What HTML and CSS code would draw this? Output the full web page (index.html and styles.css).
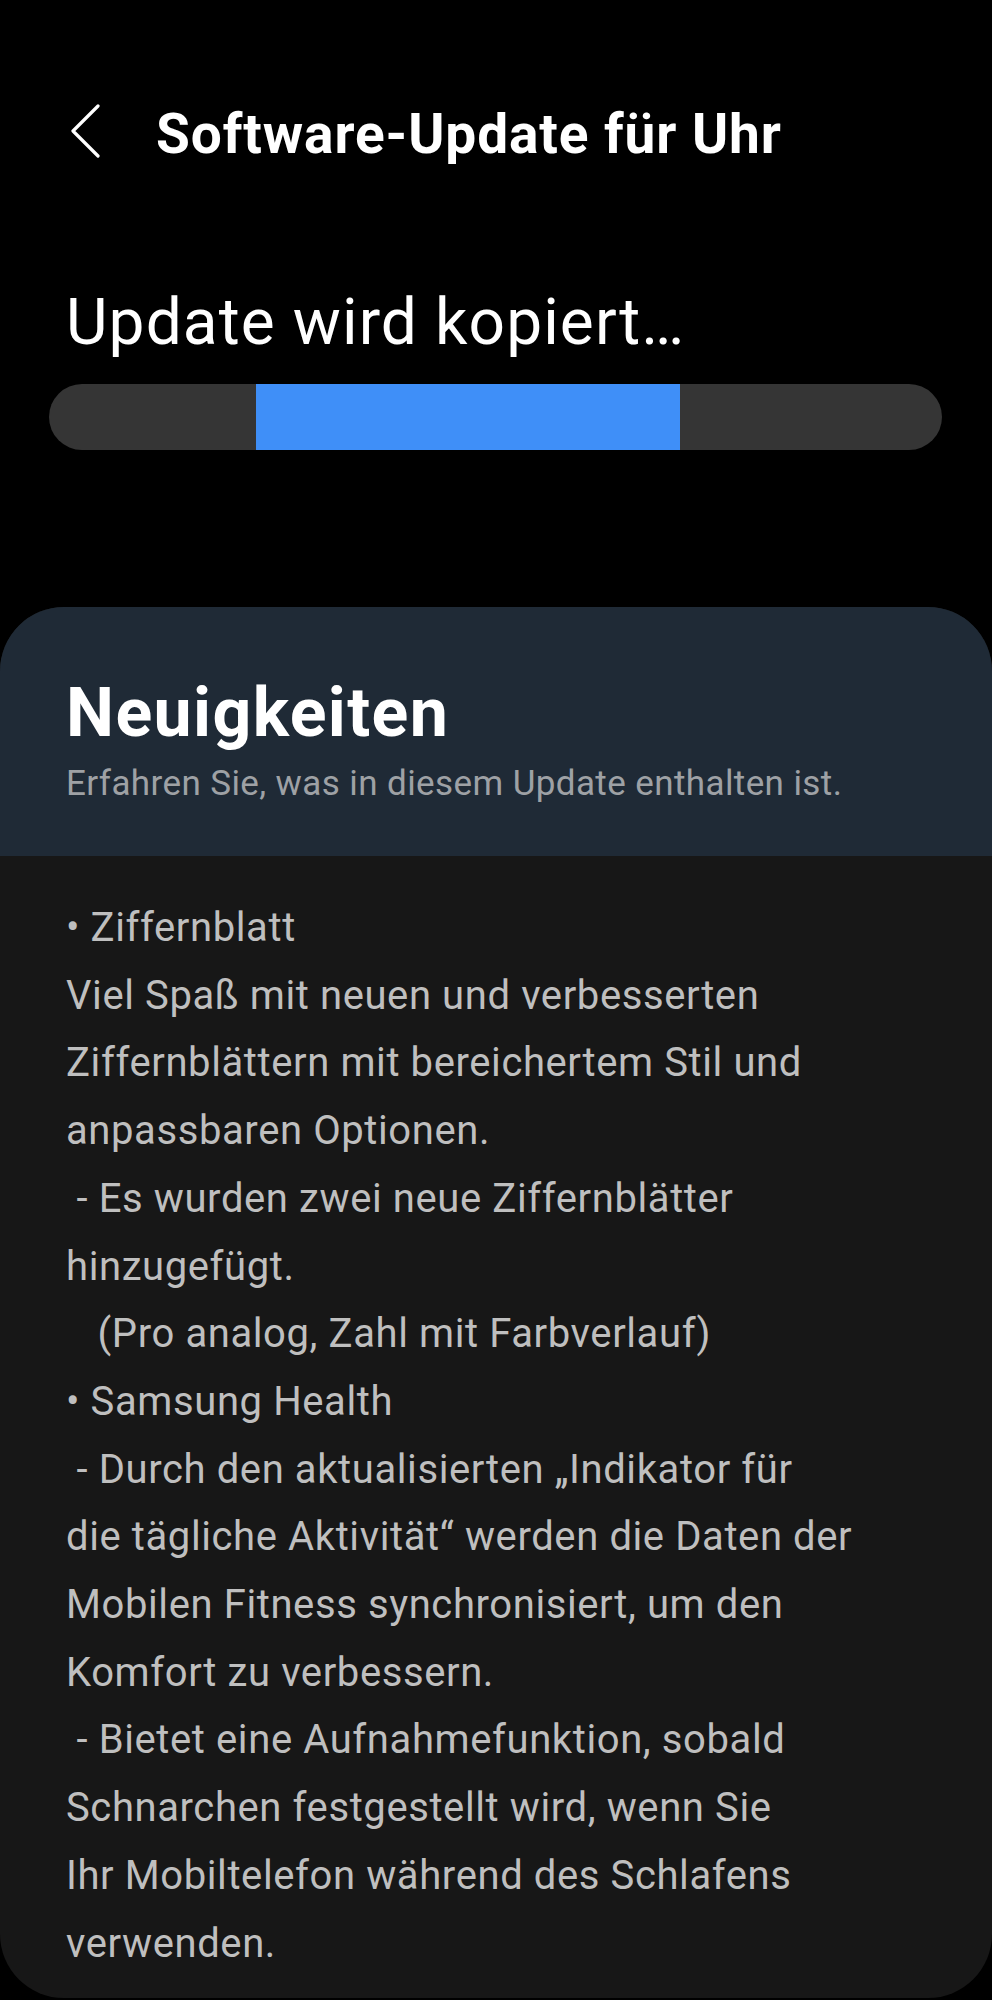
FILE: index.html
```html
<!DOCTYPE html>
<html lang="de">
<head>
<meta charset="utf-8">
<title>Software-Update für Uhr</title>
<link rel="stylesheet" href="styles.css">
</head>
<body>
<div class="screen">
  <header class="topbar">
    <svg class="back" width="30" height="60" viewBox="0 0 30 60" aria-hidden="true">
      <polyline points="28,2 3,27 28,52" fill="none" stroke="#ffffff" stroke-width="3.2" stroke-linecap="round" stroke-linejoin="round"/>
    </svg>
    <h1 class="title">Software-Update für Uhr</h1>
  </header>

  <section class="status">
    <div class="status-text">Update wird kopiert…</div>
    <div class="track"><div class="fill" style="margin-left:23.2%;width:47.5%"></div></div>
  </section>

  <section class="card">
    <div class="card-head">
      <h2 class="card-title">Neuigkeiten</h2>
      <div class="card-sub">Erfahren Sie, was in diesem Update enthalten ist.</div>
    </div>
    <div class="card-body">
      <div class="line">• Ziffernblatt</div>
      <div class="line">Viel Spaß mit neuen und verbesserten</div>
      <div class="line">Ziffernblättern mit bereichertem Stil und</div>
      <div class="line">anpassbaren Optionen.</div>
      <div class="line"> - Es wurden zwei neue Ziffernblätter</div>
      <div class="line">hinzugefügt.</div>
      <div class="line">   (Pro analog, Zahl mit Farbverlauf)</div>
      <div class="line">• Samsung Health</div>
      <div class="line"> - Durch den aktualisierten „Indikator für</div>
      <div class="line">die tägliche Aktivität“ werden die Daten der</div>
      <div class="line">Mobilen Fitness synchronisiert, um den</div>
      <div class="line">Komfort zu verbessern.</div>
      <div class="line"> - Bietet eine Aufnahmefunktion, sobald</div>
      <div class="line">Schnarchen festgestellt wird, wenn Sie</div>
      <div class="line">Ihr Mobiltelefon während des Schlafens</div>
      <div class="line">verwenden.</div>
    </div>
  </section>
</div>
</body>
</html>
```

FILE: styles.css
```css
* { box-sizing: border-box; }

html, body {
  margin: 0;
  padding: 0;
  background: #000000;
}

body {
  font-family: Roboto, "Noto Sans", "Liberation Sans", sans-serif;
  color: #ffffff;
}

.screen {
  width: 992px;
  height: 2000px;
  overflow: hidden;
  display: flex;
  flex-direction: column;
}

.topbar {
  display: flex;
  align-items: center;
  height: 60px;
  margin-top: 104px;
  padding-left: 70px;
}

.back {
  display: block;
  flex: none;
}

.title {
  margin: 0 0 0 56px;
  font-size: 55px;
  line-height: 60px;
  font-weight: 700;
  letter-spacing: 0.9px;
  color: #ffffff;
}

.status {
  margin-top: 123px;
  padding: 0 50px 0 49px;
}

.status-text {
  padding-left: 17px;
  font-size: 64px;
  line-height: 72px;
  font-weight: 400;
  letter-spacing: 1.1px;
  color: #ffffff;
}

.track {
  display: flex;
  margin-top: 25px;
  height: 66px;
  border-radius: 33px;
  background: #353535;
  overflow: hidden;
}

.fill {
  height: 100%;
  background: #3f8ff8;
}

.card {
  margin-top: 157px;
  height: 1391px;
  border-radius: 64px;
  overflow: hidden;
  background: #171717;
  display: flex;
  flex-direction: column;
}

.card-head {
  height: 249px;
  flex: none;
  background: #1f2a36;
  padding: 68px 66px 0;
}

.card-title {
  margin: 0;
  font-size: 68px;
  line-height: 76px;
  font-weight: 700;
  letter-spacing: 1.4px;
  color: #ffffff;
}

.card-sub {
  margin-top: 13px;
  font-size: 35px;
  line-height: 40px;
  letter-spacing: 0.4px;
  color: #9ea1a5;
}

.card-body {
  padding: 38px 66px 0;
}

.line {
  font-size: 40px;
  line-height: 67.7px;
  letter-spacing: 0.6px;
  color: #bfbfbf;
  white-space: pre;
}
```
